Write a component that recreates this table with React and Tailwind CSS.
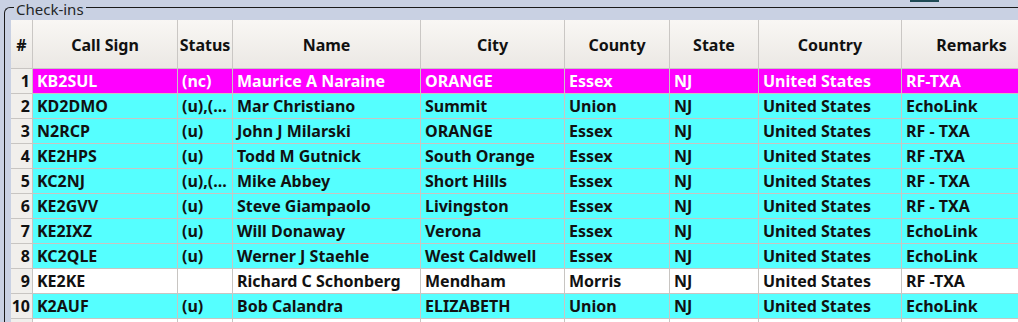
import React from "react";

const cols = [
  { key: "n", label: "#", w: 22 },
  { key: "call", label: "Call Sign", w: 145 },
  { key: "status", label: "Status", w: 55 },
  { key: "name", label: "Name", w: 188 },
  { key: "city", label: "City", w: 144 },
  { key: "county", label: "County", w: 105 },
  { key: "state", label: "State", w: 89 },
  { key: "country", label: "Country", w: 143 },
  { key: "remarks", label: "Remarks", w: 140 },
];

const rows = [
  ["KB2SUL", "(nc)", "Maurice A Naraine", "ORANGE", "Essex", "NJ", "United States", "RF-TXA", "m"],
  ["KD2DMO", "(u),(...", "Mar Christiano", "Summit", "Union", "NJ", "United States", "EchoLink", "c"],
  ["N2RCP", "(u)", "John J Milarski", "ORANGE", "Essex", "NJ", "United States", "RF - TXA", "c"],
  ["KE2HPS", "(u)", "Todd M Gutnick", "South Orange", "Essex", "NJ", "United States", "RF -TXA", "c"],
  ["KC2NJ", "(u),(...", "Mike Abbey", "Short Hills", "Essex", "NJ", "United States", "RF - TXA", "c"],
  ["KE2GVV", "(u)", "Steve Giampaolo", "Livingston", "Essex", "NJ", "United States", "RF - TXA", "c"],
  ["KE2IXZ", "(u)", "Will Donaway", "Verona", "Essex", "NJ", "United States", "EchoLink", "c"],
  ["KC2QLE", "(u)", "Werner J Staehle", "West Caldwell", "Essex", "NJ", "United States", "EchoLink", "c"],
  ["KE2KE", "", "Richard C Schonberg", "Mendham", "Morris", "NJ", "United States", "RF -TXA", "w"],
  ["K2AUF", "(u)", "Bob Calandra", "ELIZABETH", "Union", "NJ", "United States", "EchoLink", "c"],
  ["", "", "", "", "", "", "", "", "w"],
];

const gridCols = "22px 145px 55px 188px 144px 105px 89px 143px 140px";

export default function App() {
  return (
    <div
      className="w-[1018px] h-[322px] overflow-hidden bg-[#c9d1e3] pl-[4px] pt-[7px]"
      style={{ fontFamily: '"Noto Sans", "Open Sans", sans-serif' }}
    >
      <div className="relative h-[330px] border-l border-t border-[#1b1b1b] rounded-tl-[6px] pl-[6px] pt-[12px]">
        <div className="absolute left-[9px] top-[-7px] bg-[#c9d1e3] px-[2px] text-[15px] leading-[16px] text-[#232627]">
          Check-ins
        </div>
        <div className="absolute left-[905px] top-[-8px] w-[29px] h-[2px] bg-[#1e4a55]" />
        <div className="bg-white w-[1040px]">
          <div
            className="grid border-b border-[#c8c5c2] bg-gradient-to-b from-[#f9f7f4] to-[#ebe8e4]"
            style={{ gridTemplateColumns: gridCols }}
          >
            {cols.map((c) => (
              <div
                key={c.key}
                className="h-[48px] pt-[2px] border-r border-[#cac7c4] flex items-center justify-center text-[16px] font-bold text-[#111]"
              >
                {c.label}
              </div>
            ))}
          </div>
          {rows.map((r, i) => {
            const bg =
              r[8] === "m" ? "bg-[#ff00ff]" : r[8] === "c" ? "bg-[#55ffff]" : "bg-white";
            const fg = r[8] === "m" ? "text-white" : "text-[#111]";
            return (
              <div
                key={i}
                className="grid"
                style={{ gridTemplateColumns: gridCols }}
              >
                <div className="h-[25px] border-r border-b border-[#c8c5c2] bg-[#f1efec] flex items-center justify-end pr-[2px] text-[16px] font-bold text-[#111]">
                  {r[0] || i < 10 ? i + 1 : ""}
                </div>
                {r.slice(0, 8).map((v, j) => (
                  <div
                    key={j}
                    className={`h-[25px] border-r border-b border-[#c8c5c2] ${bg} ${fg} flex items-center pl-[4px] text-[16px] font-bold whitespace-nowrap overflow-hidden`}
                  >
                    {v}
                  </div>
                ))}
              </div>
            );
          })}
        </div>
      </div>
    </div>
  );
}
